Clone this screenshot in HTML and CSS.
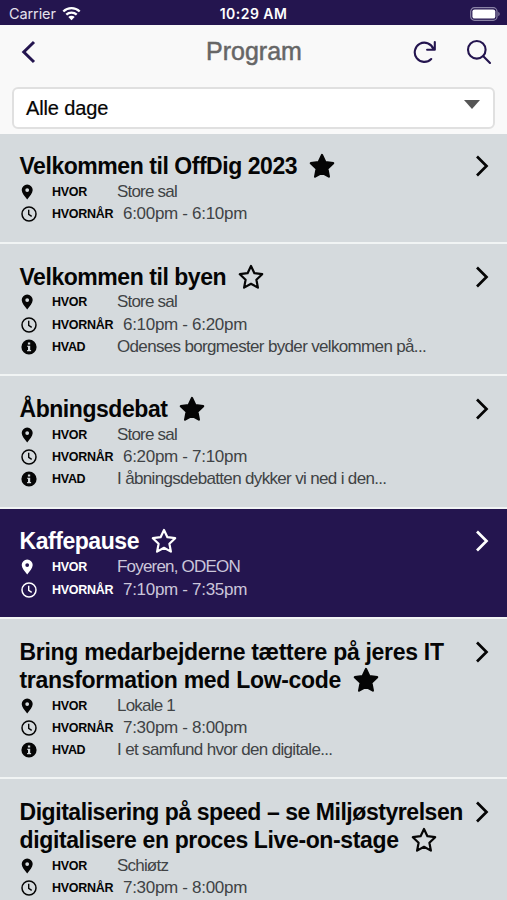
FILE: index.html
```
<!DOCTYPE html>
<html lang="da">
<head>
<meta charset="utf-8">
<title>Program</title>
<link rel="stylesheet" href="styles.css">
</head>
<body>
<svg class="defs" aria-hidden="true">
  <symbol id="star" viewBox="0 0 26 26"><path d="M13 2l3.400 7.200 7.800 1-5.800 5.500 1.500 7.900-6.900-3.800-6.900 3.800 1.500-7.900L1.800 10.200l7.800-1z"/></symbol>
  <symbol id="chev" viewBox="0 0 14 24"><path d="M2 2.500l9.500 9.500L2 21.500"/></symbol>
  <symbol id="pin" viewBox="0 0 16 16"><path fill="currentColor" fill-rule="evenodd" d="M6.200.6a5.500 5.500 0 0 1 5.500 5.500c0 3-3 6.200-5.500 9.500C3.700 12.300.7 9.100.7 6.100A5.500 5.500 0 0 1 6.200.6zm0 3.600a1.900 1.900 0 1 0 0 3.800 1.900 1.900 0 0 0 0-3.800z"/></symbol>
  <symbol id="clock" viewBox="0 0 16 16"><circle cx="8" cy="8" r="7" fill="none" stroke="currentColor" stroke-width="1.500"/><path d="M7.700 3.800v4.500l3 2" fill="none" stroke="currentColor" stroke-width="1.400"/></symbol>
  <symbol id="info" viewBox="0 0 16 16"><path fill="currentColor" fill-rule="evenodd" d="M8 .4a7.600 7.600 0 1 1 0 15.200A7.600 7.600 0 0 1 8 .4zM6.900 3.500v2h2.300v-2zM6.100 6.700v1.100h.9v3.200h-.9v1.200h4V11h-.9V6.700z"/></symbol>
</svg>
<header class="status">
  <div class="carrier">Carrier
    <svg width="19" height="15" viewBox="0 0 19 15"><g fill="none" stroke="#fff" stroke-width="2.300"><path d="M1.300 5.500a11.800 11.800 0 0 1 16.400 0"/><path d="M4.300 8.700a7.500 7.500 0 0 1 10.400 0"/></g><path fill="#fff" d="M6.300 11a4.600 4.600 0 0 1 6.400 0l-3.200 3.300z"/></svg>
  </div>
  <div class="clock">10:29 AM</div>
  <div class="battery"><svg width="30" height="14" viewBox="0 0 30 14"><rect x=".7" y=".7" width="26.300" height="12.600" rx="3.800" fill="none" stroke="#8b84a6" stroke-width="1.200"/><rect x="2.400" y="2.400" width="22.900" height="9.200" rx="2.200" fill="#fff"/><path d="M28.300 4.800q1.400.8 1.400 2.200t-1.400 2.200z" fill="#8b84a6"/></svg></div>
</header>
<nav class="bar">
  <svg class="back" width="16" height="24" viewBox="0 0 16 24"><path d="M14 2L3.800 12 14 22" fill="none" stroke="#24154f" stroke-width="3"/></svg>
  <h1>Program</h1>
  <div class="tools">
    <svg width="24" height="24" viewBox="0 0 24 24" fill="none" stroke="#24154f" stroke-width="2.100" stroke-linecap="round" stroke-linejoin="round"><path d="M18.200 19A9.600 9.600 0 1 1 20.300 8.800M21.800 2v7.700h-7.700"/></svg>
    <svg width="26" height="26" viewBox="0 0 26 26" fill="none" stroke="#24154f" stroke-width="2.100" stroke-linecap="round"><circle cx="10.800" cy="10.800" r="8.800"/><path d="M17.300 17.300l6.700 6.700"/></svg>
  </div>
</nav>
<div class="filter"><div class="select"><span>Alle dage</span><i class="caret"></i></div></div>
<main>
  <article class="card">
    <h2><span>Velkommen til OffDig 2023</span><svg class="star full"><use href="#star"/></svg></h2>
    <svg class="chev"><use href="#chev"/></svg>
    <div class="row"><svg><use href="#pin"/></svg><b>HVOR</b><span>Store sal</span></div>
    <div class="row time"><svg><use href="#clock"/></svg><b>HVORNÅR</b><span>6:00pm - 6:10pm</span></div>
  </article>
  <article class="card">
    <h2><span>Velkommen til byen</span><svg class="star"><use href="#star"/></svg></h2>
    <svg class="chev"><use href="#chev"/></svg>
    <div class="row"><svg><use href="#pin"/></svg><b>HVOR</b><span>Store sal</span></div>
    <div class="row time"><svg><use href="#clock"/></svg><b>HVORNÅR</b><span>6:10pm - 6:20pm</span></div>
    <div class="row about"><svg><use href="#info"/></svg><b>HVAD</b><span>Odenses borgmester byder velkommen på...</span></div>
  </article>
  <article class="card">
    <h2><span>Åbningsdebat</span><svg class="star full"><use href="#star"/></svg></h2>
    <svg class="chev"><use href="#chev"/></svg>
    <div class="row"><svg><use href="#pin"/></svg><b>HVOR</b><span>Store sal</span></div>
    <div class="row time"><svg><use href="#clock"/></svg><b>HVORNÅR</b><span>6:20pm - 7:10pm</span></div>
    <div class="row about"><svg><use href="#info"/></svg><b>HVAD</b><span>I åbningsdebatten dykker vi ned i den...</span></div>
  </article>
  <article class="card dark">
    <h2><span>Kaffepause</span><svg class="star"><use href="#star"/></svg></h2>
    <svg class="chev"><use href="#chev"/></svg>
    <div class="row"><svg><use href="#pin"/></svg><b>HVOR</b><span>Foyeren, ODEON</span></div>
    <div class="row time"><svg><use href="#clock"/></svg><b>HVORNÅR</b><span>7:10pm - 7:35pm</span></div>
  </article>
  <article class="card">
    <h2 class="wide"><span>Bring medarbejderne tættere på jeres IT<br>transformation med Low-code</span><svg class="star full"><use href="#star"/></svg></h2>
    <svg class="chev"><use href="#chev"/></svg>
    <div class="row"><svg><use href="#pin"/></svg><b>HVOR</b><span>Lokale 1</span></div>
    <div class="row time"><svg><use href="#clock"/></svg><b>HVORNÅR</b><span>7:30pm - 8:00pm</span></div>
    <div class="row about"><svg><use href="#info"/></svg><b>HVAD</b><span>I et samfund hvor den digitale...</span></div>
  </article>
  <article class="card">
    <h2><span>Digitalisering på speed – se Miljøstyrelsen<br><span class="last">digitalisere en proces Live-on-stage</span></span><svg class="star"><use href="#star"/></svg></h2>
    <svg class="chev"><use href="#chev"/></svg>
    <div class="row"><svg><use href="#pin"/></svg><b>HVOR</b><span>Schiøtz</span></div>
    <div class="row time"><svg><use href="#clock"/></svg><b>HVORNÅR</b><span>7:30pm - 8:00pm</span></div>
  </article>
</main>
</body>
</html>
```
FILE: styles.css
```
* { box-sizing: border-box; }
html, body { height: 900px; overflow: hidden; }
body { margin: 0; background: #f9f9f9; color: #050505; font-family: "Liberation Sans", Arial, sans-serif; }
.defs { display: none; }
.status { height: 25px; padding: 2px 7px 0 9px; background: #24154f; color: #fff; display: grid; grid-template-columns: 1fr auto 1fr; align-items: center; font-family: Inter, sans-serif; font-size: 14.500px; }
.carrier { display: flex; align-items: center; gap: 6px; color: #e4e1ec; letter-spacing: -.1px; }
.clock { font-weight: 600; font-size: 14px; letter-spacing: .45px; margin-right: 2px; }
.battery { display: flex; justify-content: flex-end; }
.bar { height: 53px; padding: 0 15px 0 20px; display: grid; grid-template-columns: 1fr auto 1fr; align-items: center; }
.bar h1 { margin: -2px 4px 0 0; font-size: 25px; line-height: 30px; font-weight: 400; color: #666; -webkit-text-stroke: .5px #666; }
.tools { display: flex; justify-content: flex-end; align-items: center; gap: 29px; }
.filter { padding: 9px 12px 4px; height: 55.500px; }
.select { height: 42px; padding: 0 13px 0 12px; border: 2px solid #e0e0e0; border-radius: 6px; background: #fff; display: flex; align-items: center; justify-content: space-between; font-size: 20px; letter-spacing: -.12px; }
.select span { padding-top: 1px; -webkit-text-stroke: .2px; }
.caret { border: 8px solid transparent; border-top: 9px solid #555; border-bottom: 0; margin-bottom: 8px; }
.card { display: grid; grid-template-columns: 1fr 14px; padding: 18.800px 18.500px 16.300px 19.500px; background: #d5dadd; border-bottom: 2px solid #f1f4f4; }
.card h2 { margin: 0 0 .8px; font-size: 23px; line-height: 28px; font-weight: 700; letter-spacing: -.45px; white-space: nowrap; }
.card h2.wide { letter-spacing: -.3px; }
.last { letter-spacing: -.37px; }
.star { width: 26px; height: 26px; margin: -2px 0 0 12px; vertical-align: -5px; fill: none; stroke: currentColor; stroke-width: 2.200; stroke-linejoin: round; }
.star.full { fill: currentColor; }
.chev { width: 14px; height: 24px; margin-top: 2px; fill: none; stroke: currentColor; stroke-width: 2.700; }
.row { grid-column: 1 / -1; display: grid; grid-template-columns: 32.500px 65px 1fr; height: 22.200px; line-height: 22px; align-items: center; white-space: nowrap; }
.row.time { grid-template-columns: 32.500px 71px 1fr; }
.row svg { width: 16px; height: 16px; margin-left: 1.500px; }
.row b { font-size: 12.500px; letter-spacing: -.28px; }
.row span { font-size: 17px; letter-spacing: -.8px; color: #404345; }
.row.time span { letter-spacing: -.3px; }
.row.about span { letter-spacing: -.66px; }
.dark { background: #24154f; color: #fff; }
.dark .row span { color: #cbc6da; }
```
